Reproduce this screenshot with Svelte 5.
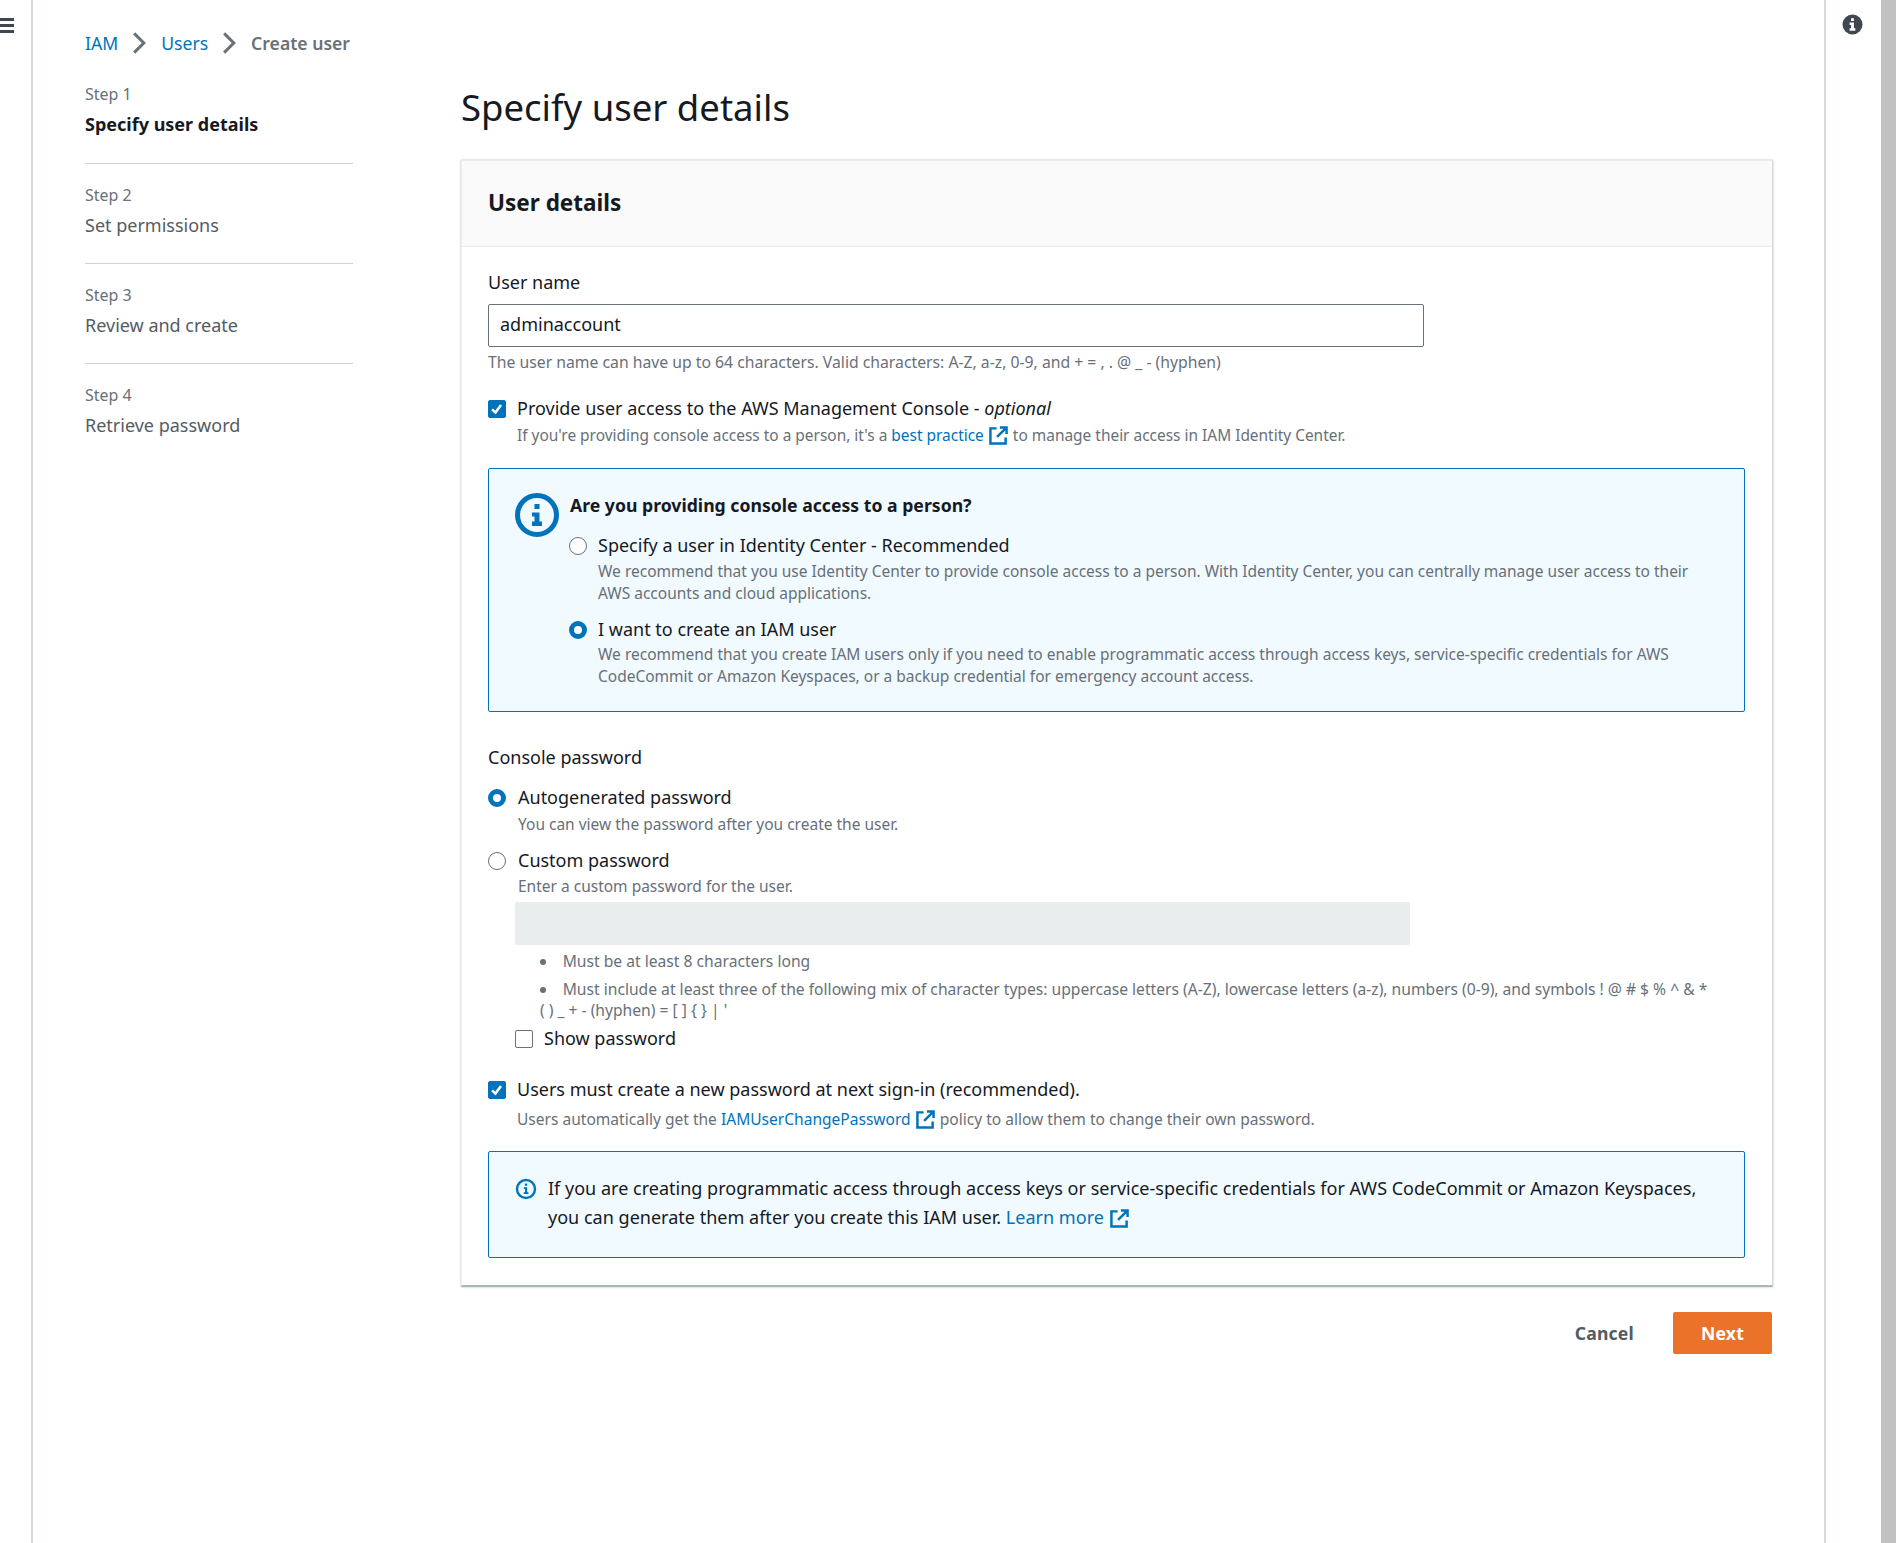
<script>
const steps = [
  { n: 'Step 1', label: 'Specify user details', active: true },
  { n: 'Step 2', label: 'Set permissions' },
  { n: 'Step 3', label: 'Review and create' },
  { n: 'Step 4', label: 'Retrieve password' }
];
</script>

{#snippet ext()}
  <svg class="ext" viewBox="0 0 20 20" fill="none" stroke="#0073bb" stroke-width="2.6">
    <path d="M8 2.500H1.500v16h16V12" />
    <path d="M8.500 11.500 17 3M11.500 1.500H18.500V8.500" />
  </svg>
{/snippet}

{#snippet check()}
  <span class="box on">
    <svg viewBox="0 0 18 18" fill="none" stroke="#fff" stroke-width="2.8"><path d="M3.500 9.500 7.200 13 13.500 4.500" /></svg>
  </span>
{/snippet}

<div class="page">
  <aside class="rail-left">
    <div class="burger"><i></i><i></i><i></i></div>
  </aside>

  <div class="main">
    <nav class="crumbs">
      <a href="#iam">IAM</a>
      <svg class="chev" viewBox="0 0 14 22" fill="none" stroke="#687078" stroke-width="2.8"><path d="M2 2l9 9-9 9" /></svg>
      <a href="#users">Users</a>
      <svg class="chev" viewBox="0 0 14 22" fill="none" stroke="#687078" stroke-width="2.8"><path d="M2 2l9 9-9 9" /></svg>
      <span>Create user</span>
    </nav>

    <div class="columns">
      <ol class="steps">
        {#each steps as s}
          <li class:active={s.active}>
            <small>{s.n}</small>
            <div>{s.label}</div>
          </li>
        {/each}
      </ol>

      <div class="content">
        <h1>Specify user details</h1>

        <section class="card">
          <header><h2>User details</h2></header>
          <div class="body">
            <div class="label">User name</div>
            <div class="input">adminaccount</div>
            <p class="hint first">The user name can have up to 64 characters. Valid characters: A-Z, a-z, 0-9, and + = , . @ _ - (hyphen)</p>

            <div class="opt console">
              {@render check()}
              <div>
                <div class="opt-label">Provide user access to the AWS Management Console - <em>optional</em></div>
                <p class="hint">If you're providing console access to a person, it's a <a href="#bp">best practice</a> {@render ext()} to manage their access in IAM Identity Center.</p>
              </div>
            </div>

            <div class="alert big">
              <svg class="big-icon" viewBox="0 0 44 44">
                <circle cx="22" cy="22" r="19.500" fill="none" stroke="#0073bb" stroke-width="5" />
                <path fill="#0073bb" d="M19.500 11h5v5h-5zM17 19.500h7.500v9H27V33H17v-4.500h2.500v-5H17z" />
              </svg>
              <div class="alert-body">
                <h3>Are you providing console access to a person?</h3>
                <div class="opt r1">
                  <span class="radio"></span>
                  <div>
                    <div class="opt-label">Specify a user in Identity Center - Recommended</div>
                    <p class="hint">We recommend that you use Identity Center to provide console access to a person. With Identity Center, you can centrally manage user access to their AWS accounts and cloud applications.</p>
                  </div>
                </div>
                <div class="opt r2">
                  <span class="radio on"></span>
                  <div>
                    <div class="opt-label">I want to create an IAM user</div>
                    <p class="hint">We recommend that you create IAM users only if you need to enable programmatic access through access keys, service-specific credentials for AWS CodeCommit or Amazon Keyspaces, or a backup credential for emergency account access.</p>
                  </div>
                </div>
              </div>
            </div>

            <div class="label pw-title">Console password</div>

            <div class="opt auto">
              <span class="radio on"></span>
              <div>
                <div class="opt-label">Autogenerated password</div>
                <p class="hint">You can view the password after you create the user.</p>
              </div>
            </div>

            <div class="opt custom">
              <span class="radio"></span>
              <div>
                <div class="opt-label">Custom password</div>
                <p class="hint">Enter a custom password for the user.</p>
              </div>
            </div>

            <div class="custom-more">
              <div class="input disabled"></div>
              <ul class="rules">
                <li>Must be at least 8 characters long</li>
                <li>Must include at least three of the following mix of character types: uppercase letters (A-Z), lowercase letters (a-z), numbers (0-9), and symbols ! @ # $ % ^ &amp; * ( ) _ + - (hyphen) = [ ] &#123; &#125; | '</li>
              </ul>
              <div class="opt show">
                <span class="box"></span>
                <div class="opt-label">Show password</div>
              </div>
            </div>

            <div class="opt reset">
              {@render check()}
              <div>
                <div class="opt-label">Users must create a new password at next sign-in (recommended).</div>
                <p class="hint">Users automatically get the <a href="#p">IAMUserChangePassword</a> {@render ext()} policy to allow them to change their own password.</p>
              </div>
            </div>

            <div class="alert small">
              <svg class="small-icon" viewBox="0 0 22 22">
                <circle cx="11" cy="11" r="9" fill="none" stroke="#0073bb" stroke-width="2.400" />
                <path fill="#0073bb" d="M9.800 5.500h2.400v2.300H9.800zM8.800 9.300h3.400v5h1.200v1.700H8.700v-1.700h1.300v-3.300H8.800z" />
              </svg>
              <p>If you are creating programmatic access through access keys or service-specific credentials for AWS CodeCommit or Amazon Keyspaces, you can generate them after you create this IAM user. <a href="#more">Learn more</a> {@render ext()}</p>
            </div>
          </div>
        </section>

        <div class="actions">
          <button class="cancel">Cancel</button>
          <button class="next">Next</button>
        </div>
      </div>
    </div>
  </div>

  <aside class="rail-right">
    <svg viewBox="0 0 22 22">
      <circle cx="11" cy="11" r="10.500" fill="#414750" />
      <path fill="#fff" d="M9.500 4.500h3v2.800h-3zM8 9h4.500v6H14v2.500H8V15h1.500v-3.500H8z" />
    </svg>
  </aside>
  <div class="scrollbar"></div>
</div>

<style>
  :global(body) {
    margin: 0;
    background: #fff;
    font-family: "Noto Sans", "Open Sans", sans-serif;
    color: #16191f;
    font-size: 18px;
  }

  .page {
    display: flex;
    height: 1543px;
    overflow: hidden;
  }

  a {
    color: #0073bb;
    text-decoration: none;
  }

  .rail-left {
    flex: 0 0 31px;
    border-right: 2px solid #d5dbdb;
  }

  .burger {
    margin-top: 18px;
    width: 14px;
    display: flex;
    flex-direction: column;
    gap: 3px;
  }

  .burger i {
    display: block;
    height: 3px;
    background: #414750;
  }

  .main {
    flex: 1;
    min-width: 0;
    padding: 0 51px 0 52px;
  }

  .crumbs {
    display: flex;
    align-items: center;
    height: 24px;
    margin-top: 31px;
    color: #687078;
    font-weight: 600;
    gap: 14px;
    font-size: 17.6px;
  }

  .crumbs a {
    font-weight: 400;
  }

  .chev {
    width: 15px;
    height: 24px;
  }

  .columns {
    display: flex;
    margin-top: 17px;
  }

  .steps {
    list-style: none;
    margin: 0 108px 0 0;
    padding: 0;
    flex: 0 0 268px;
  }

  .steps li {
    height: 100px;
    box-sizing: border-box;
    padding-top: 21px;
    border-bottom: 1px solid #ccd3d3;
    color: #545b64;
  }

  .steps li:first-child {
    height: 92px;
    padding-top: 12px;
  }

  .steps li:last-child {
    border-bottom: 0;
  }

  .steps small {
    display: block;
    font-size: 16px;
    line-height: 20px;
    color: #687078;
    margin-bottom: 9px;
  }

  .steps li div {
    line-height: 22px;
  }

  .steps .active div {
    font-weight: 700;
    color: #16191f;
  }

  .content {
    flex: 1;
    min-width: 0;
  }

  h1 {
    font-size: 36.5px;
    font-weight: 400;
    line-height: 48px;
    margin: 0;
    height: 88px;
    padding-top: 11px;
    box-sizing: border-box;
  }

  .card {
    border: 1px solid #eaeded;
    border-right-color: #d5dbdb;
    border-bottom: 2px solid #aab7b8;
    box-shadow: 0 0 2px rgba(0, 28, 36, 0.3);
  }

  .card header {
    background: #fafafa;
    border-bottom: 1px solid #eaeded;
    height: 86px;
    display: flex;
    align-items: center;
    padding: 0 0 3px 26px;
    box-sizing: border-box;
  }

  h2 {
    margin: 0;
    font-size: 22.5px;
    font-weight: 700;
  }

  .body {
    padding: 23px 27px 27px 26px;
  }

  .label {
    line-height: 24px;
    margin-bottom: 10px;
  }

  .input {
    height: 43px;
    box-sizing: border-box;
    width: 936px;
    border: 1px solid #687078;
    border-radius: 2px;
    padding: 0 11px;
    line-height: 39px;
  }

  .input.disabled {
    border: 0;
    background: #eaeded;
    width: 895px;
  }

  .hint {
    margin: 0;
    font-size: 15.5px;
    line-height: 21.5px;
    color: #687078;
  }

  .hint.first {
    margin-top: 5px;
    font-size: 15.75px;
  }

  .opt {
    display: flex;
    gap: 12px;
  }

  .opt-label {
    line-height: 24px;
  }

  .opt-label + .hint {
    margin-top: 4px;
  }

  .console {
    margin-top: 22px;
  }

  .console .hint,
  .auto .hint {
    margin-top: 5px;
  }

  .console .hint {
    font-size: 15.45px;
  }

  .box {
    flex: 0 0 auto;
    width: 18px;
    height: 18px;
    box-sizing: border-box;
    border: 1px solid #687078;
    border-radius: 2px;
    margin-top: 4px;
    background: #fff;
  }

  .box.on {
    background: #0073bb;
    border-color: #0073bb;
    display: block;
  }

  .box svg {
    display: block;
    width: 100%;
    height: 100%;
  }

  .opt .box + div,
  .opt .box + .opt-label {
    margin-left: -1px;
  }

  .radio {
    flex: 0 0 auto;
    width: 18px;
    height: 18px;
    box-sizing: border-box;
    border: 1px solid #687078;
    border-radius: 50%;
    margin-top: 4px;
    background: #fff;
  }

  .radio.on {
    border: 5.500px solid #0073bb;
  }

  .ext {
    display: inline-block;
    width: 19px;
    height: 19px;
    margin: 0 1px;
    vertical-align: -4px;
  }

  .alert {
    background: #f1faff;
    border: 1px solid #0073bb;
    border-radius: 2px;
    box-sizing: border-box;
    display: flex;
  }

  .alert.big {
    height: 244px;
    margin-top: 22px;
    padding: 26px 27px 0 26px;
    gap: 11px;
  }

  .big-icon {
    flex: 0 0 44px;
    width: 44px;
    height: 44px;
    margin-top: -2px;
  }

  .alert-body {
    flex: 1;
    min-width: 0;
  }

  h3 {
    margin: 0;
    font-size: 17.65px;
    line-height: 22px;
    font-weight: 700;
    margin-top: -1px;
  }

  .r1 {
    margin-top: 17px;
    gap: 10px;
    margin-left: -1px;
  }

  .r2 {
    margin-top: 13px;
    gap: 10px;
    margin-left: -1px;
  }

  .r1 > div,
  .r2 > div {
    margin-left: 1px;
  }

  .r2 .hint {
    margin-top: 3px;
  }

  .pw-title {
    margin: 33px 0 0;
  }

  .auto {
    margin-top: 16px;
  }

  .custom {
    margin-top: 12px;
  }

  .custom-more {
    padding-left: 27px;
  }

  .custom-more .input {
    margin-top: 5px;
  }

  .rules {
    margin: 6px 0 0;
    padding: 0 34px 0 25px;
    font-size: 15.65px;
    line-height: 21.5px;
    color: #687078;
    list-style-position: inside;
  }

  .rules li + li {
    margin-top: 6px;
  }

  .show {
    margin-top: 4px;
  }

  .reset {
    margin-top: 27px;
  }

  .reset .hint {
    margin-top: 8px;
    font-size: 15.55px;
  }

  .alert.small {
    height: 107px;
    margin-top: 21px;
    padding: 23px 27px 0 26px;
    gap: 11px;
  }

  .small-icon {
    flex: 0 0 22px;
    width: 22px;
    height: 22px;
    margin-top: 3px;
  }

  .alert.small p {
    margin: 0;
    font-size: 18.05px;
    line-height: 29px;
    position: relative;
    top: -1px;
  }

  .actions {
    display: flex;
    justify-content: flex-end;
    align-items: center;
    gap: 39px;
    margin: 25px 1px 0 0;
  }

  button {
    font: inherit;
    font-size: 17.6px;
    font-weight: 700;
    border: 0;
    background: none;
    padding: 0;
    letter-spacing: 0.2px;
  }

  .cancel {
    color: #545b64;
  }

  .next {
    width: 99px;
    height: 42px;
    background: #eb7229;
    color: #fff;
    border-radius: 2px;
  }

  .rail-right {
    flex: 0 0 52px;
    padding-right: 3px;
    border-left: 2px solid #d5dbdb;
    display: flex;
    justify-content: center;
    align-items: flex-start;
  }

  .rail-right svg {
    width: 21px;
    height: 21px;
    margin-top: 14px;
  }

  .scrollbar {
    flex: 0 0 15px;
    background: #c1c1c1;
  }
</style>
